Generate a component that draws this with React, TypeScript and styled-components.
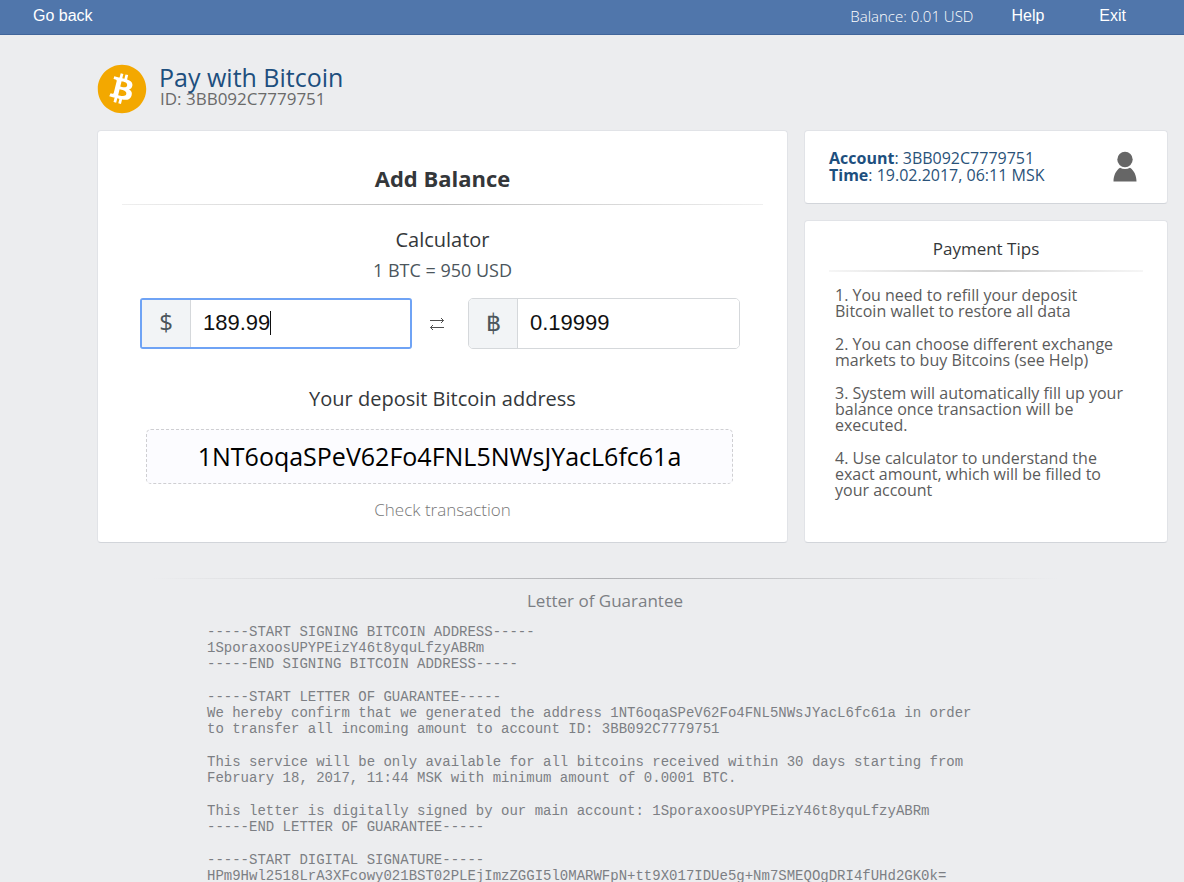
import React, { useState } from "react";
import styled, { createGlobalStyle } from "styled-components";
import { FaBitcoin } from "react-icons/fa";

const sans = '"Open Sans", "Noto Sans", sans-serif';
const arial = '"Liberation Sans", Arial, sans-serif';
const mono = '"Liberation Mono", "Courier New", monospace';

const GlobalStyle = createGlobalStyle`
  * { box-sizing: border-box; }
  body {
    margin: 0;
    background: #ecedef;
    color: #34373a;
    font-family: ${sans};
    font-size: 16px;
  }
  h1, h2, h3, p { margin: 0; font-weight: 400; }
`;

const TopBar = styled.header`
  display: flex;
  align-items: center;
  justify-content: space-between;
  height: 35px;
  padding: 0 58px 2px 33px;
  background: #5076ab;
  border-bottom: 1px solid #41659a;
`;

const TopNav = styled.nav`
  display: flex;
  align-items: center;
`;

const TopLink = styled.a<{ $gap?: number }>`
  margin-left: ${(p) => p.$gap ?? 0}px;
  color: #fff;
  font: 16px/20px ${arial};
  text-decoration: none;
`;

const Balance = styled.span`
  color: #fff;
  font-size: 15px;
  font-weight: 300;
  line-height: 20px;
`;

const Page = styled.main`
  padding: 30px 16px 0 97px;
`;

const Brand = styled.div`
  display: flex;
  align-items: flex-start;
  gap: 13px;
  margin-bottom: 17px;
  padding-left: 1px;
`;

const Coin = styled.span`
  display: flex;
  align-items: center;
  justify-content: center;
  width: 48px;
  height: 48px;
  border-radius: 50%;
  background: radial-gradient(circle, #fff 50%, transparent 51%);
  color: #f3a800;

  svg { flex: none; }
`;

const BrandTitle = styled.h1`
  color: #1d4f7e;
  font-size: 25px;
  line-height: 24px;
`;

const BrandId = styled.p`
  padding-left: 1px;
  color: #6a6a6a;
  font-size: 17px;
  line-height: 20px;
`;

const Columns = styled.div`
  display: grid;
  grid-template-columns: minmax(0, 691fr) minmax(0, 364fr);
  gap: 16px;
`;

const Side = styled.aside`
  display: flex;
  flex-direction: column;
  gap: 16px;
`;

const Card = styled.section`
  background: #fff;
  border: 1px solid #e1e3e7;
  border-bottom-color: #d2d5da;
  border-radius: 4px;
`;

const BalanceCard = styled(Card)`
  padding: 31px 24px 20px;
  text-align: center;
`;

const CardTitle = styled.h2`
  margin-bottom: 10px;
  font-size: 22px;
  font-weight: 700;
  line-height: 32px;
`;

const Rule = styled.hr<{ $weight?: number; $edge?: string; $mid?: string }>`
  height: ${(p) => p.$weight ?? 1}px;
  margin: 0;
  border: 0;
  background: linear-gradient(
    to right,
    ${(p) => p.$edge ?? "#efefef"},
    ${(p) => p.$mid ?? "#bfbfbf"},
    ${(p) => p.$edge ?? "#efefef"}
  );
`;

const CalculatorHead = styled.div`
  padding-top: 20px;
`;

const Subtitle = styled.h3`
  font-size: 20px;
  line-height: 30px;
`;

const Rate = styled.p`
  color: #4c565c;
  font-size: 18px;
  line-height: 30px;
`;

const Calculator = styled.form`
  display: grid;
  grid-template-columns: 1fr 56px 1fr;
  align-items: center;
  margin: 13px 23px 35px 18px;
  color: #4c565c;
`;

const SwapIcon = styled.svg`
  justify-self: center;
  width: 16px;
  height: 14px;
  margin-right: 6px;
  fill: none;
  stroke: #4f4f4f;
`;

const Group = styled.label<{ $active?: boolean }>`
  position: relative;
  display: flex;
  height: 51px;
  overflow: hidden;
  border: ${(p) => (p.$active ? "2px solid #6fa3f5" : "1px solid #d5d8db")};
  border-radius: ${(p) => (p.$active ? 3 : 5)}px;
`;

const Addon = styled.span`
  flex: 0 0 49px;
  display: flex;
  align-items: center;
  justify-content: center;
  padding-bottom: 4px;
  background: #f2f4f6;
  border-right: 1px solid #d5d8db;
  font-size: 24px;
`;

const Amount = styled.input`
  flex: 1;
  min-width: 0;
  padding: 0 12px 2px;
  border: 0;
  outline: 0;
  background: #fff;
  color: #111;
  font: 22px ${arial};
`;

const Caret = styled.span`
  position: absolute;
  top: 11px;
  left: 128px;
  width: 1px;
  height: 24px;
  background: #111;
`;

const Address = styled.p`
  margin: 15px 30px 14px 24px;
  border: 1px dashed #cfcfd2;
  border-radius: 5px;
  background: #fcfcff;
  color: #000;
  font-size: 25px;
  line-height: 53px;
`;

const CheckLink = styled.a`
  display: block;
  color: #777;
  font-size: 17px;
  font-weight: 300;
  line-height: 24px;
  text-decoration: none;
`;

const AccountCard = styled(Card)`
  display: flex;
  align-items: center;
  justify-content: space-between;
  min-height: 74px;
  padding: 0 30px 0 24px;
  color: #2a5279;
  line-height: 17px;
`;

const Strong = styled.strong`
  color: #1d4f7e;
`;

const UserIcon = styled.svg`
  width: 24px;
  height: 32px;
  fill: #666;
`;

const TipsCard = styled(Card)`
  flex: 1;
  padding: 16px 24px;
`;

const TipsTitle = styled.h2`
  margin-bottom: 9px;
  font-size: 17px;
  line-height: 24px;
  text-align: center;
`;

const Tips = styled.div`
  display: flex;
  flex-direction: column;
  gap: 17px;
  padding: 15px 6px 0;
  color: #5b5b5b;
  font-size: 16px;
  line-height: 16px;
`;

const Guarantee = styled.section`
  margin: 35px 110px 0 55px;
`;

const GuaranteeTitle = styled.h2`
  margin: 8px 0 9px;
  color: #7c7f84;
  font-size: 17px;
  line-height: 28px;
  text-align: center;
`;

const Letter = styled.div`
  display: flex;
  flex-direction: column;
  gap: 17px;
  padding-left: 55px;
  color: #7c7f84;
  font: 14px/16px ${mono};
  white-space: pre;
`;

const tips = [
  ["1. You need to refill your deposit", "Bitcoin wallet to restore all data"],
  ["2. You can choose different exchange", "markets to buy Bitcoins (see Help)"],
  ["3. System will automatically fill up your", "balance once transaction will be", "executed."],
  ["4. Use calculator to understand the", "exact amount, which will be filled to", "your account"],
];

const letter = [
  `-----START SIGNING BITCOIN ADDRESS-----
1SporaxoosUPYPEizY46t8yquLfzyABRm
-----END SIGNING BITCOIN ADDRESS-----`,
  `-----START LETTER OF GUARANTEE-----
We hereby confirm that we generated the address 1NT6oqaSPeV62Fo4FNL5NWsJYacL6fc61a in order
to transfer all incoming amount to account ID: 3BB092C7779751`,
  `This service will be only available for all bitcoins received within 30 days starting from
February 18, 2017, 11:44 MSK with minimum amount of 0.0001 BTC.`,
  `This letter is digitally signed by our main account: 1SporaxoosUPYPEizY46t8yquLfzyABRm
-----END LETTER OF GUARANTEE-----`,
  `-----START DIGITAL SIGNATURE-----
HPm9Hwl2518LrA3XFcowy021BST02PLEjImzZGGI5l0MARWFpN+tt9X017IDUe5g+Nm7SMEQOgDRI4fUHd2GK0k=`,
];

export default function App() {
  const [usd, setUsd] = useState("189.99");
  const [btc, setBtc] = useState("0.19999");

  return (
    <>
      <GlobalStyle />
      <TopBar>
        <TopLink href="#back">Go back</TopLink>
        <TopNav>
          <Balance>Balance: 0.01 USD</Balance>
          <TopLink href="#help" $gap={38}>Help</TopLink>
          <TopLink href="#exit" $gap={55}>Exit</TopLink>
        </TopNav>
      </TopBar>
      <Page>
        <Brand>
          <Coin><FaBitcoin size={50} /></Coin>
          <div>
            <BrandTitle>Pay with Bitcoin</BrandTitle>
            <BrandId>ID: 3BB092C7779751</BrandId>
          </div>
        </Brand>
        <Columns>
          <BalanceCard>
            <CardTitle>Add Balance</CardTitle>
            <Rule />
            <CalculatorHead>
              <Subtitle>Calculator</Subtitle>
              <Rate>1 BTC = 950 USD</Rate>
            </CalculatorHead>
            <Calculator>
              <Group $active>
                <Addon>$</Addon>
                <Amount aria-label="Amount in USD" value={usd} onChange={(e) => setUsd(e.target.value)} />
                <Caret />
              </Group>
              <SwapIcon viewBox="0 0 16 14" aria-hidden="true">
                <path d="M1 3.5h13.500M12 1l2.500 2.500L12 6M15 10.500H1.500M4 8l-2.500 2.500L4 13" />
              </SwapIcon>
              <Group>
                <Addon>฿</Addon>
                <Amount aria-label="Amount in BTC" value={btc} onChange={(e) => setBtc(e.target.value)} />
              </Group>
            </Calculator>
            <Subtitle>Your deposit Bitcoin address</Subtitle>
            <Address>1NT6oqaSPeV62Fo4FNL5NWsJYacL6fc61a</Address>
            <CheckLink href="#check">Check transaction</CheckLink>
          </BalanceCard>
          <Side>
            <AccountCard>
              <div>
                <p><Strong>Account</Strong>: 3BB092C7779751</p>
                <p><Strong>Time</Strong>: 19.02.2017, 06:11 MSK</p>
              </div>
              <UserIcon viewBox="0 0 24 32" aria-hidden="true">
                <circle cx="12" cy="8.500" r="7.700" />
                <path d="M0.500 30.500c0-6 2.500-11 6.500-13.700 3 1.700 7 1.700 10 0 4 2.700 6.500 7.700 6.500 13.700z" />
              </UserIcon>
            </AccountCard>
            <TipsCard>
              <TipsTitle>Payment Tips</TipsTitle>
              <Rule $weight={2} $edge="#f6f6f6" $mid="#d0d0d0" />
              <Tips>
                {tips.map((lines) => (
                  <p key={lines[0]}>
                    {lines.map((line, i) => (
                      <React.Fragment key={line}>
                        {i > 0 && <br />}
                        {line}
                      </React.Fragment>
                    ))}
                  </p>
                ))}
              </Tips>
            </TipsCard>
          </Side>
        </Columns>
        <Guarantee>
          <Rule $edge="#ecedef" $mid="#b0b1b4" />
          <GuaranteeTitle>Letter of Guarantee</GuaranteeTitle>
          <Letter>
            {letter.map((block) => (
              <p key={block}>{block}</p>
            ))}
          </Letter>
        </Guarantee>
      </Page>
    </>
  );
}
